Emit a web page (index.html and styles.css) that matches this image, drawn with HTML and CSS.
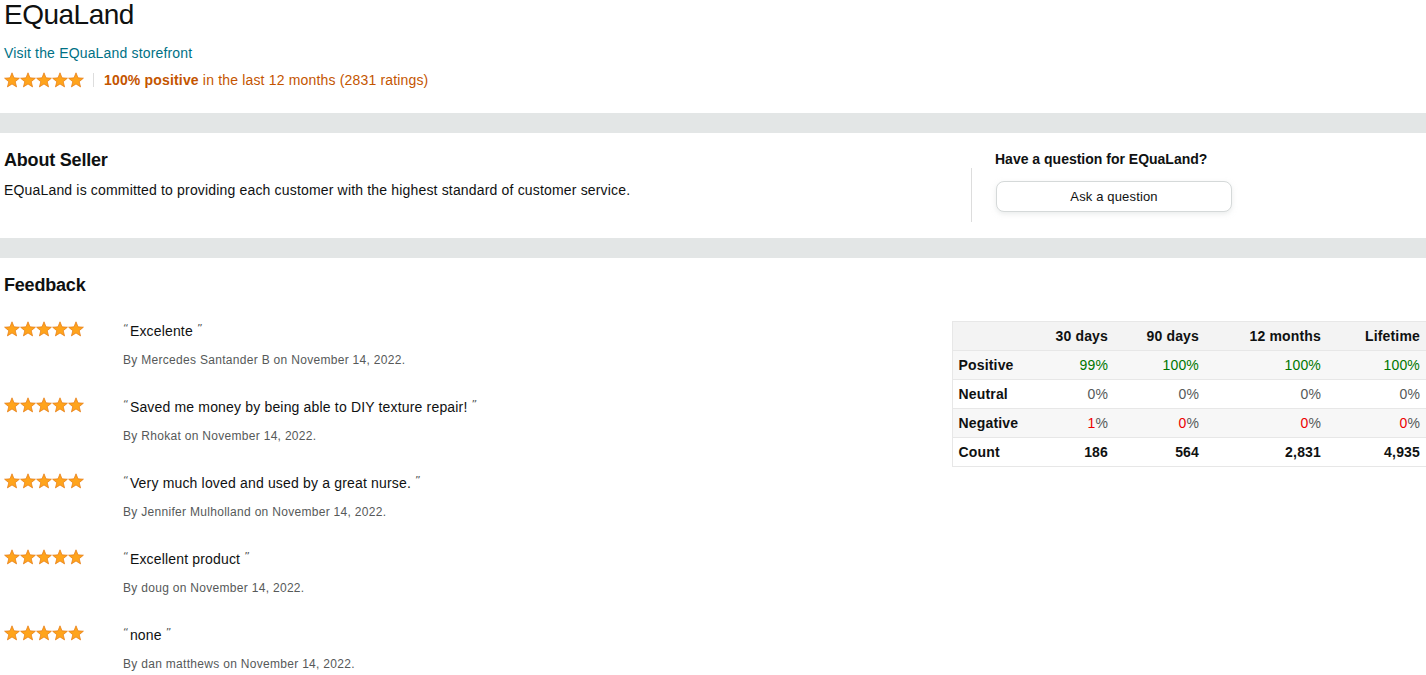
FILE: index.html
```html
<!DOCTYPE html>
<html lang="en">
<head>
<meta charset="utf-8">
<title>EQuaLand</title>
<link rel="stylesheet" href="styles.css">
</head>
<body>
<svg class="defs" width="0" height="0" aria-hidden="true">
  <defs>
    <symbol id="star" viewBox="0 0 16 16">
      <polygon points="8,0.8 10,5.85 15.42,6.19 11.23,9.65 12.58,14.91 8,12 3.42,14.91 4.77,9.65 0.58,6.19 6,5.85" fill="#ffa41c" stroke="#e47911" stroke-width="0.7" stroke-linejoin="round"/>
    </symbol>
  </defs>
</svg>

<header class="seller-head">
  <h1 class="seller-name">EQuaLand</h1>
  <a class="store-link" href="#">Visit the EQuaLand storefront</a>
  <div class="rating-row">
    <svg class="stars" width="80" height="16" viewBox="0 0 80 16"><use href="#star" x="0" width="16" height="16"/><use href="#star" x="16" width="16" height="16"/><use href="#star" x="32" width="16" height="16"/><use href="#star" x="48" width="16" height="16"/><use href="#star" x="64" width="16" height="16"/></svg>
    <span class="sep"></span>
    <span class="rating-text"><b>100% positive</b> in the last 12 months (2831 ratings)</span>
  </div>
</header>

<div class="band"></div>

<section class="about">
  <div class="about-left">
    <h2 class="section-title">About Seller</h2>
    <p class="about-text">EQuaLand is committed to providing each customer with the highest standard of customer service.</p>
  </div>
  <div class="about-right">
    <div class="divider"></div>
    <div class="question">
      <h3 class="question-title">Have a question for EQuaLand?</h3>
      <button class="ask-btn" type="button">Ask a question</button>
    </div>
  </div>
</section>

<div class="band"></div>

<section class="feedback">
  <h2 class="section-title">Feedback</h2>
  <div class="feedback-body">
    <ul class="reviews">
      <li class="review">
        <svg class="stars" width="80" height="16" viewBox="0 0 80 16"><use href="#star" x="0" width="16" height="16"/><use href="#star" x="16" width="16" height="16"/><use href="#star" x="32" width="16" height="16"/><use href="#star" x="48" width="16" height="16"/><use href="#star" x="64" width="16" height="16"/></svg>
        <div class="review-main">
          <p class="quote"><span class="qm">“</span>Excelente <span class="qm">”</span></p>
          <p class="by">By Mercedes Santander B on November 14, 2022.</p>
        </div>
      </li>
      <li class="review">
        <svg class="stars" width="80" height="16" viewBox="0 0 80 16"><use href="#star" x="0" width="16" height="16"/><use href="#star" x="16" width="16" height="16"/><use href="#star" x="32" width="16" height="16"/><use href="#star" x="48" width="16" height="16"/><use href="#star" x="64" width="16" height="16"/></svg>
        <div class="review-main">
          <p class="quote"><span class="qm">“</span>Saved me money by being able to DIY texture repair! <span class="qm">”</span></p>
          <p class="by">By Rhokat on November 14, 2022.</p>
        </div>
      </li>
      <li class="review">
        <svg class="stars" width="80" height="16" viewBox="0 0 80 16"><use href="#star" x="0" width="16" height="16"/><use href="#star" x="16" width="16" height="16"/><use href="#star" x="32" width="16" height="16"/><use href="#star" x="48" width="16" height="16"/><use href="#star" x="64" width="16" height="16"/></svg>
        <div class="review-main">
          <p class="quote"><span class="qm">“</span>Very much loved and used by a great nurse. <span class="qm">”</span></p>
          <p class="by">By Jennifer Mulholland on November 14, 2022.</p>
        </div>
      </li>
      <li class="review">
        <svg class="stars" width="80" height="16" viewBox="0 0 80 16"><use href="#star" x="0" width="16" height="16"/><use href="#star" x="16" width="16" height="16"/><use href="#star" x="32" width="16" height="16"/><use href="#star" x="48" width="16" height="16"/><use href="#star" x="64" width="16" height="16"/></svg>
        <div class="review-main">
          <p class="quote"><span class="qm">“</span>Excellent product <span class="qm">”</span></p>
          <p class="by">By doug on November 14, 2022.</p>
        </div>
      </li>
      <li class="review">
        <svg class="stars" width="80" height="16" viewBox="0 0 80 16"><use href="#star" x="0" width="16" height="16"/><use href="#star" x="16" width="16" height="16"/><use href="#star" x="32" width="16" height="16"/><use href="#star" x="48" width="16" height="16"/><use href="#star" x="64" width="16" height="16"/></svg>
        <div class="review-main">
          <p class="quote"><span class="qm">“</span>none <span class="qm">”</span></p>
          <p class="by">By dan matthews on November 14, 2022.</p>
        </div>
      </li>
    </ul>

    <table class="summary">
      <colgroup>
        <col class="c-label"><col class="c-30"><col class="c-90"><col class="c-12m"><col class="c-life">
      </colgroup>
      <thead>
        <tr class="head-row"><th></th><th>30 days</th><th>90 days</th><th>12 months</th><th>Lifetime</th></tr>
      </thead>
      <tbody>
        <tr class="shaded"><th>Positive</th><td class="pos">99%</td><td class="pos">100%</td><td class="pos">100%</td><td class="pos">100%</td></tr>
        <tr><th>Neutral</th><td class="neu">0%</td><td class="neu">0%</td><td class="neu">0%</td><td class="neu">0%</td></tr>
        <tr class="shaded"><th>Negative</th><td class="neu"><span class="neg">1</span>%</td><td class="neu"><span class="neg">0</span>%</td><td class="neu"><span class="neg">0</span>%</td><td class="neu"><span class="neg">0</span>%</td></tr>
        <tr><th>Count</th><td class="cnt">186</td><td class="cnt">564</td><td class="cnt">2,831</td><td class="cnt">4,935</td></tr>
      </tbody>
    </table>
  </div>
</section>
</body>
</html>
```

FILE: styles.css
```css
* { box-sizing: border-box; }

html, body {
  margin: 0;
  padding: 0;
  background: #fff;
  color: #0f1111;
  font-family: "Liberation Sans", Arial, sans-serif;
  font-size: 14px;
  letter-spacing: 0.17px;
}

.defs { position: absolute; width: 0; height: 0; overflow: hidden; }

.seller-head {
  padding: 0 4px 23px;
  display: flex;
  flex-direction: column;
  align-items: flex-start;
}

.seller-name {
  margin: 0;
  font-size: 28px;
  line-height: 30px;
  font-weight: 400;
  letter-spacing: -0.5px;
  color: #0f1111;
}

.store-link {
  margin-top: 13px;
  line-height: 20px;
  color: #007185;
  text-decoration: none;
}

.rating-row {
  margin-top: 7px;
  height: 20px;
  display: flex;
  align-items: center;
}

.stars { display: block; flex-shrink: 0; }

.sep {
  width: 1px;
  height: 14px;
  background: #ddd;
  margin: 0 10px 0 9px;
}

.rating-text {
  color: #c45500;
  line-height: 20px;
}
.rating-text b { font-weight: 700; }

.band {
  height: 20px;
  background: #e3e6e6;
}

.about {
  display: flex;
  height: 105px;
}

.about-left {
  flex: 1;
  padding: 15px 4px 0;
}

.section-title {
  margin: 0;
  font-size: 18px;
  line-height: 24px;
  font-weight: 700;
  letter-spacing: -0.2px;
}

.about-text {
  margin: 8px 0 0;
  line-height: 20px;
}

.about-right {
  width: 455px;
  flex-shrink: 0;
  display: flex;
}

.divider {
  width: 1px;
  height: 54px;
  margin-top: 35px;
  background: #ddd;
}

.question {
  padding: 16px 0 0 23px;
}

.question-title {
  margin: 0;
  font-size: 14px;
  line-height: 20px;
  font-weight: 700;
  letter-spacing: 0;
}

.ask-btn {
  display: block;
  margin: 12px 0 0 1px;
  width: 236px;
  height: 31px;
  border: 1px solid #d5d9d9;
  border-radius: 8px;
  background: #fff;
  box-shadow: 0 2px 5px 0 rgba(213, 217, 217, 0.5);
  font-family: inherit;
  font-size: 13px;
  letter-spacing: 0.15px;
  color: #0f1111;
  padding: 0;
}

.feedback {
  padding: 15px 0 0 4px;
}

.feedback-body {
  margin-top: 24px;
  display: flex;
  align-items: flex-start;
}

.reviews {
  list-style: none;
  margin: 0;
  padding: 0;
  flex: 1;
}

.review {
  display: flex;
  height: 76px;
}

.review .stars { margin: 0 39px 0 0; }

.review-main { margin-top: -2px; }

.quote {
  margin: 0;
  line-height: 20px;
  font-size: 14px;
  color: #0f1111;
}

.qm {
  color: #565959;
  font-family: "DejaVu Sans", sans-serif;
  font-size: 11px;
  vertical-align: 4px;
  margin-right: 1px;
}

.by {
  margin: 10px 0 0;
  font-size: 12px;
  line-height: 18px;
  letter-spacing: 0.3px;
  color: #565959;
}

.summary {
  width: 474px;
  flex-shrink: 0;
  table-layout: fixed;
  border-collapse: collapse;
  border-left: 1px solid #e7e7e7;
  border-top: 1px solid #e7e7e7;
}

.c-label { width: 88px; }
.c-30 { width: 74px; }
.c-90 { width: 91px; }
.c-12m { width: 122px; }
.c-life { width: 99px; }

.summary th, .summary td {
  height: 29px;
  padding: 0 6px;
  border-bottom: 1px solid #e7e7e7;
  font-size: 14px;
  line-height: 20px;
  text-align: right;
  font-weight: 400;
}

.summary tbody th {
  text-align: left;
  font-weight: 700;
  padding-left: 6px;
}

.head-row { background: #f3f3f3; }
.summary .head-row th { font-weight: 700; }

.shaded { background: #f7f7f7; }

.summary .pos { color: #007600; }
.summary .neu { color: #565959; }
.summary .neg { color: #e00; }
.summary .cnt { font-weight: 700; color: #0f1111; }
```
